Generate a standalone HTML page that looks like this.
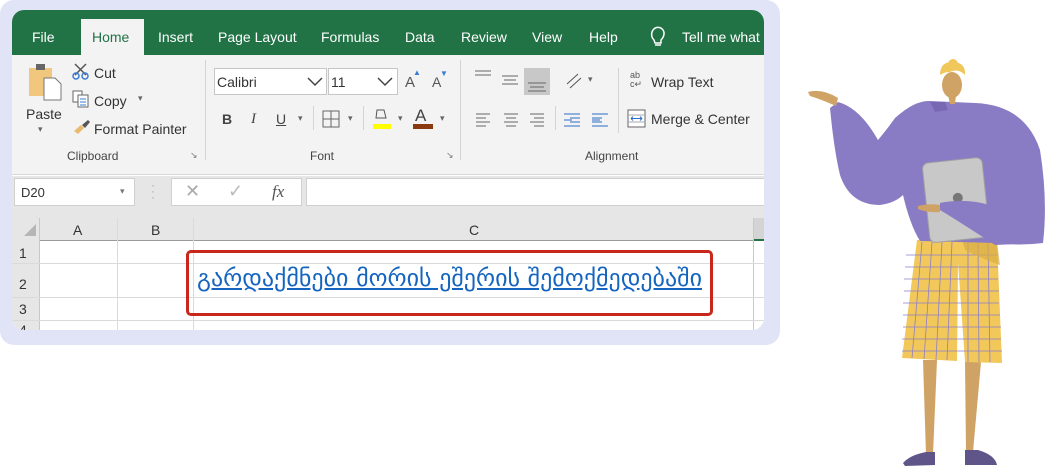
<!DOCTYPE html>
<html><head><meta charset="utf-8"><style>
*{margin:0;padding:0;box-sizing:border-box}
body{width:1046px;height:466px;background:#fff;position:relative;overflow:hidden;font-family:"Liberation Sans",sans-serif;font-size:14px;color:#333}
.a{position:absolute;white-space:nowrap}
.t{color:#fff;font-size:14px;top:29px}
.sep{position:absolute;width:1px;background:#d4d4d4}
.gl{position:absolute;background:#dadada}
</style></head><body>
<div class="a" style="left:0;top:0;width:780px;height:345px;background:#e1e4f6;border-radius:14px"></div>
<div class="a" style="left:12px;top:10px;width:752px;height:320px;background:#fff;border-radius:12px;overflow:hidden">
 <div class="a" style="left:0;top:0;width:752px;height:45px;background:#217346"></div>
 <div class="a" style="left:0;top:45px;width:752px;height:120px;background:#f3f3f3;border-bottom:1px solid #d8d8d8"></div>
 <div class="a" style="left:69px;top:9px;width:63px;height:37px;background:#f3f3f3"></div>
 <div class="a" style="left:0;top:166px;width:752px;height:65px;background:#e6e6e6"></div>
</div>
<span class="a t" style="left:32px">File</span>
<span class="a t" style="left:92px;color:#217346">Home</span>
<span class="a t" style="left:158px">Insert</span>
<span class="a t" style="left:218px">Page Layout</span>
<span class="a t" style="left:321px">Formulas</span>
<span class="a t" style="left:405px">Data</span>
<span class="a t" style="left:461px">Review</span>
<span class="a t" style="left:532px">View</span>
<span class="a t" style="left:589px">Help</span>
<svg class="a" style="left:650px;top:26px" width="16" height="22" viewBox="0 0 16 22"><path d="M4 14 C1 11 1 7 3 4 C6 0 11 1 13 4 C15 7 14 11 11 14 L11 17 L5 17 Z M5 19 H11" fill="none" stroke="#fff" stroke-width="1.5"/></svg>
<span class="a t" style="left:682px">Tell me what</span>
<svg class="a" style="left:28px;top:62px" width="36" height="40"><rect x="1" y="6" width="23" height="28" fill="#f0c77d"/><rect x="8" y="2" width="9" height="6" fill="#666"/><path d="M16 16 H27 L33 22 V38 H16 Z" fill="#fff" stroke="#777"/></svg>
<span class="a" style="left:26px;top:106px;font-size:14px">Paste</span>
<span class="a" style="left:38px;top:124px;font-size:9px;color:#666">▾</span>
<svg class="a" style="left:72px;top:62px" width="18" height="18"><path d="M3 2 L14 13 M14 2 L3 13" stroke="#555" stroke-width="1.5"/><circle cx="4" cy="14" r="3" fill="none" stroke="#3a7bd5" stroke-width="1.5"/><circle cx="13" cy="14" r="3" fill="none" stroke="#3a7bd5" stroke-width="1.5"/></svg>
<span class="a" style="left:94px;top:65px">Cut</span>
<svg class="a" style="left:72px;top:90px" width="18" height="18"><rect x="1" y="1" width="9" height="11" fill="#fff" stroke="#666"/><rect x="6" y="5" width="10" height="12" fill="#fff" stroke="#666"/><path d="M8 9h6M8 12h6M8 15h6" stroke="#3a7bd5"/></svg>
<span class="a" style="left:94px;top:93px">Copy</span>
<span class="a" style="left:138px;top:93px;font-size:9px;color:#666">▾</span>
<svg class="a" style="left:72px;top:119px" width="20" height="16"><path d="M2 12 L9 6 L12 9 L6 15 Z" fill="#e9b96e"/><path d="M10 6 L16 1 L18 3 L13 9" fill="#555"/></svg>
<span class="a" style="left:94px;top:121px">Format Painter</span>
<span class="a" style="left:67px;top:149px;font-size:12px;color:#444">Clipboard</span>
<span class="a" style="left:190px;top:150px;font-size:9px;color:#777">↘</span>
<div class="sep" style="left:205px;top:60px;height:100px"></div>
<div class="a" style="left:214px;top:68px;width:113px;height:27px;background:#fff;border:1px solid #c6c6c6"></div>
<span class="a" style="left:217px;top:74px">Calibri</span>
<svg class="a" style="left:306px;top:75px" width="18" height="12"><path d="M2 3 L9 10 L16 3" fill="none" stroke="#444" stroke-width="1.5"/></svg>
<div class="a" style="left:328px;top:68px;width:70px;height:27px;background:#fff;border:1px solid #c6c6c6"></div>
<span class="a" style="left:331px;top:74px">11</span>
<svg class="a" style="left:376px;top:75px" width="18" height="12"><path d="M2 3 L9 10 L16 3" fill="none" stroke="#444" stroke-width="1.5"/></svg>
<span class="a" style="left:405px;top:74px;font-size:15px;color:#555">A</span><span class="a" style="left:413px;top:68px;font-size:8px;color:#3a7bd5">▲</span>
<span class="a" style="left:432px;top:74px;font-size:14px;color:#555">A</span><span class="a" style="left:440px;top:69px;font-size:8px;color:#3a7bd5">▼</span>
<span class="a" style="left:222px;top:111px;font-weight:bold;color:#444">B</span>
<span class="a" style="left:251px;top:111px;font-style:italic;font-family:'Liberation Serif',serif;font-size:15px;color:#444">I</span>
<span class="a" style="left:276px;top:111px;text-decoration:underline;color:#444">U</span>
<span class="a" style="left:298px;top:113px;font-size:9px;color:#666">▾</span>
<div class="sep" style="left:313px;top:106px;height:24px"></div>
<svg class="a" style="left:322px;top:110px" width="18" height="18"><rect x="1" y="1" width="16" height="16" fill="none" stroke="#666"/><path d="M9 1V17M1 9H17" stroke="#666"/></svg>
<span class="a" style="left:348px;top:113px;font-size:9px;color:#666">▾</span>
<div class="sep" style="left:363px;top:106px;height:24px"></div>
<svg class="a" style="left:371px;top:106px" width="22" height="24"><path d="M6 4 L13 4 L15 12 L5 12 Z" fill="none" stroke="#555"/><rect x="2" y="18" width="18" height="5" fill="#ffff00"/></svg>
<span class="a" style="left:398px;top:113px;font-size:9px;color:#666">▾</span>
<span class="a" style="left:415px;top:106px;font-size:17px;color:#444">A</span>
<div class="a" style="left:413px;top:124px;width:20px;height:5px;background:#8b3a0f"></div>
<span class="a" style="left:440px;top:113px;font-size:9px;color:#666">▾</span>
<span class="a" style="left:310px;top:149px;font-size:12px;color:#444">Font</span>
<span class="a" style="left:446px;top:150px;font-size:9px;color:#777">↘</span>
<div class="sep" style="left:460px;top:60px;height:100px"></div>
<svg class="a" style="left:470px;top:66px" width="160" height="70" stroke="#666">
<path d="M5 5h16M5 9h16"/><path d="M32 10h16M34 14h12M32 18h16"/>
<rect x="54" y="2" width="26" height="27" fill="#c8c8c8" stroke="none"/><path d="M58 17h18M60 21h14M58 25h18"/>
<path d="M97 18 L108 8 M100 22 L111 12" stroke="#555"/>
<path d="M6 48h14M6 52h10M6 56h14M6 60h10"/><path d="M34 48h14M36 52h10M34 56h14M36 60h10"/><path d="M60 48h14M64 52h10M60 56h14M64 60h10"/>
<path d="M94 48h16M100 52h10M100 56h10M94 60h16M102 54h-8" stroke="#2b6cc4"/>
<path d="M122 48h16M122 52h10M122 56h10M122 60h16M122 54h8" stroke="#2b6cc4"/>
</svg>
<span class="a" style="left:588px;top:74px;font-size:9px;color:#666">▾</span>
<div class="sep" style="left:555px;top:106px;height:24px"></div>
<div class="sep" style="left:618px;top:68px;height:65px"></div>
<span class="a" style="left:630px;top:71px;font-size:9px;color:#555;line-height:9px">ab<br>c↵</span>
<span class="a" style="left:651px;top:74px">Wrap Text</span>
<svg class="a" style="left:627px;top:109px" width="20" height="20"><rect x="1" y="1" width="17" height="17" fill="#fff" stroke="#666"/><path d="M1 6h17M1 13h17" stroke="#aaa"/><path d="M4 9.5h11M4 9.5l2-2M4 9.5l2 2M15 9.5l-2-2M15 9.5l-2 2" stroke="#2b6cc4"/></svg>
<span class="a" style="left:651px;top:111px">Merge &amp; Center</span>
<span class="a" style="left:585px;top:149px;font-size:12px;color:#444">Alignment</span>
<div class="a" style="left:14px;top:178px;width:121px;height:28px;background:#fff;border:1px solid #d0d0d0"></div>
<span class="a" style="left:21px;top:185px;font-size:13px">D20</span>
<span class="a" style="left:120px;top:186px;font-size:9px;color:#777">▾</span>
<span class="a" style="left:151px;top:182px;color:#aaa;font-size:12px;line-height:6px">·<br>·<br>·</span>
<div class="a" style="left:171px;top:178px;width:131px;height:28px;background:#fff;border:1px solid #d0d0d0"></div>
<span class="a" style="left:185px;top:181px;font-size:18px;color:#aaa">✕</span>
<span class="a" style="left:228px;top:181px;font-size:18px;color:#bbb">✓</span>
<span class="a" style="left:272px;top:182px;font-family:'Liberation Serif',serif;font-style:italic;font-size:17px;color:#555">fx</span>
<div class="a" style="left:306px;top:178px;width:458px;height:28px;background:#fff;border:1px solid #d0d0d0;border-right:none"></div>
<div class="a" style="left:12px;top:218px;width:752px;height:112px;background:#fff;border-radius:0 0 12px 12px;overflow:hidden">
 <div class="a" style="left:0;top:0;width:752px;height:23px;background:#e6e6e6;border-bottom:1px solid #9a9a9a"></div>
 <div class="a" style="left:0;top:0;width:28px;height:112px;background:#e6e6e6;border-right:1px solid #c8c8c8"></div>
 <svg class="a" style="left:10px;top:4px" width="16" height="16"><path d="M14 2 V14 H2 Z" fill="#b5b5b5"/></svg>
 <div class="gl" style="left:105px;top:0;width:1px;height:112px"></div>
 <div class="gl" style="left:181px;top:0;width:1px;height:112px"></div>
 <div class="gl" style="left:741px;top:0;width:1px;height:112px;background:#c8c8c8"></div>
 <div class="a" style="left:742px;top:0;width:12px;height:23px;background:#d4d4d4;border-bottom:2px solid #217346"></div>
 <div class="gl" style="left:0;top:45px;width:752px;height:1px"></div>
 <div class="gl" style="left:0;top:79px;width:752px;height:1px"></div>
 <div class="gl" style="left:0;top:102px;width:752px;height:1px"></div>
 <span class="a" style="left:61px;top:4px;font-size:14px">A</span>
 <span class="a" style="left:139px;top:4px;font-size:14px">B</span>
 <span class="a" style="left:457px;top:4px;font-size:14px">C</span>
 <span class="a" style="left:7px;top:27px;font-size:14px">1</span>
 <span class="a" style="left:7px;top:58px;font-size:14px">2</span>
 <span class="a" style="left:7px;top:83px;font-size:14px">3</span>
 <span class="a" style="left:7px;top:104px;font-size:14px">4</span>
</div>
<div class="a" style="left:186px;top:250px;width:527px;height:66px;border:3px solid #c8281c;border-radius:5px"></div>
<span class="a" style="left:197px;top:264px;font-family:'DejaVu Sans',sans-serif;font-size:24px;color:#1565c0;text-decoration:underline">გარდაქმნები მორის ეშერის შემოქმედებაში</span>
<svg class="a" style="left:790px;top:50px" width="256" height="416" viewBox="790 50 256 416">
 <path d="M923 360 L937 360 L933 455 L926 455 Z" fill="#cfa366"/>
 <path d="M965 362 L981 362 L973 452 L966 452 Z" fill="#cfa366"/>
 <path d="M903 463 Q910 455 926 452 L935 452 L935 465 L905 466 Z" fill="#5f5589"/>
 <path d="M965 450 L978 450 Q995 455 997 465 L965 465 Z" fill="#5f5589"/>
 <path d="M917 240 L902 358 L957 361 L958 262 L965 362 L1002 363 L997 240 Z" fill="#f2c85b"/>
 <g stroke="#8f7fc7" stroke-width="0.8" fill="none">
 <path d="M906 255h92M905 267h93M904 279h94M904 291h95M903 303h96M903 315h97M903 327h98M902 339h99M902 351h100"/>
 <path d="M922 242 L912 358M932 242 L924 359M942 242 L936 360M952 242 L947 360M968 242 L968 362M978 242 L979 362M988 242 L990 362"/>
 </g>
 <path d="M962 240 L997 242 L1000 265 Q985 260 965 250 Z" fill="#d9ac45" opacity="0.7"/>
 <path d="M930 101 Q915 100 895 118 Q888 128 878 140 Q860 108 838 102 L830 108 Q834 150 840 175 Q850 205 880 205 Q895 203 903 195 Q910 225 920 241 L997 243 Q1020 246 1043 243 Q1048 200 1040 150 Q1025 105 975 103 Z" fill="#8a7cc4"/>
 <path d="M930 102 L945 102 L948 110 L935 112 Z" fill="#7868b3"/>
 <g transform="rotate(-6 957 200)"><rect x="926" y="160" width="60" height="80" rx="6" fill="#c8c8c8" stroke="#a0a0a0"/><circle cx="958" cy="198" r="5" fill="#777"/></g>
 <path d="M940 203 Q965 198 990 205 L1040 243 L995 245 Q960 222 940 210 Z" fill="#8a7cc4"/>
 <path d="M918 206 Q930 203 940 205 L940 212 Q928 213 918 209 Z" fill="#cfa366"/>
 <path d="M808 92 Q822 88 838 98 L836 106 Q820 99 810 96 Z" fill="#cfa366"/>
 <path d="M948 95 L956 95 L955 104 L950 104 Z" fill="#cfa366"/>
 <ellipse cx="952" cy="85" rx="10" ry="13" fill="#cfa366"/>
 <path d="M940 75 Q940 62 952 62 Q966 62 965 75 Q958 68 950 72 Q944 72 940 75 Z" fill="#f0c75a"/>
 <circle cx="953" cy="64" r="5" fill="#f0c75a"/>
</svg>
</body></html>
